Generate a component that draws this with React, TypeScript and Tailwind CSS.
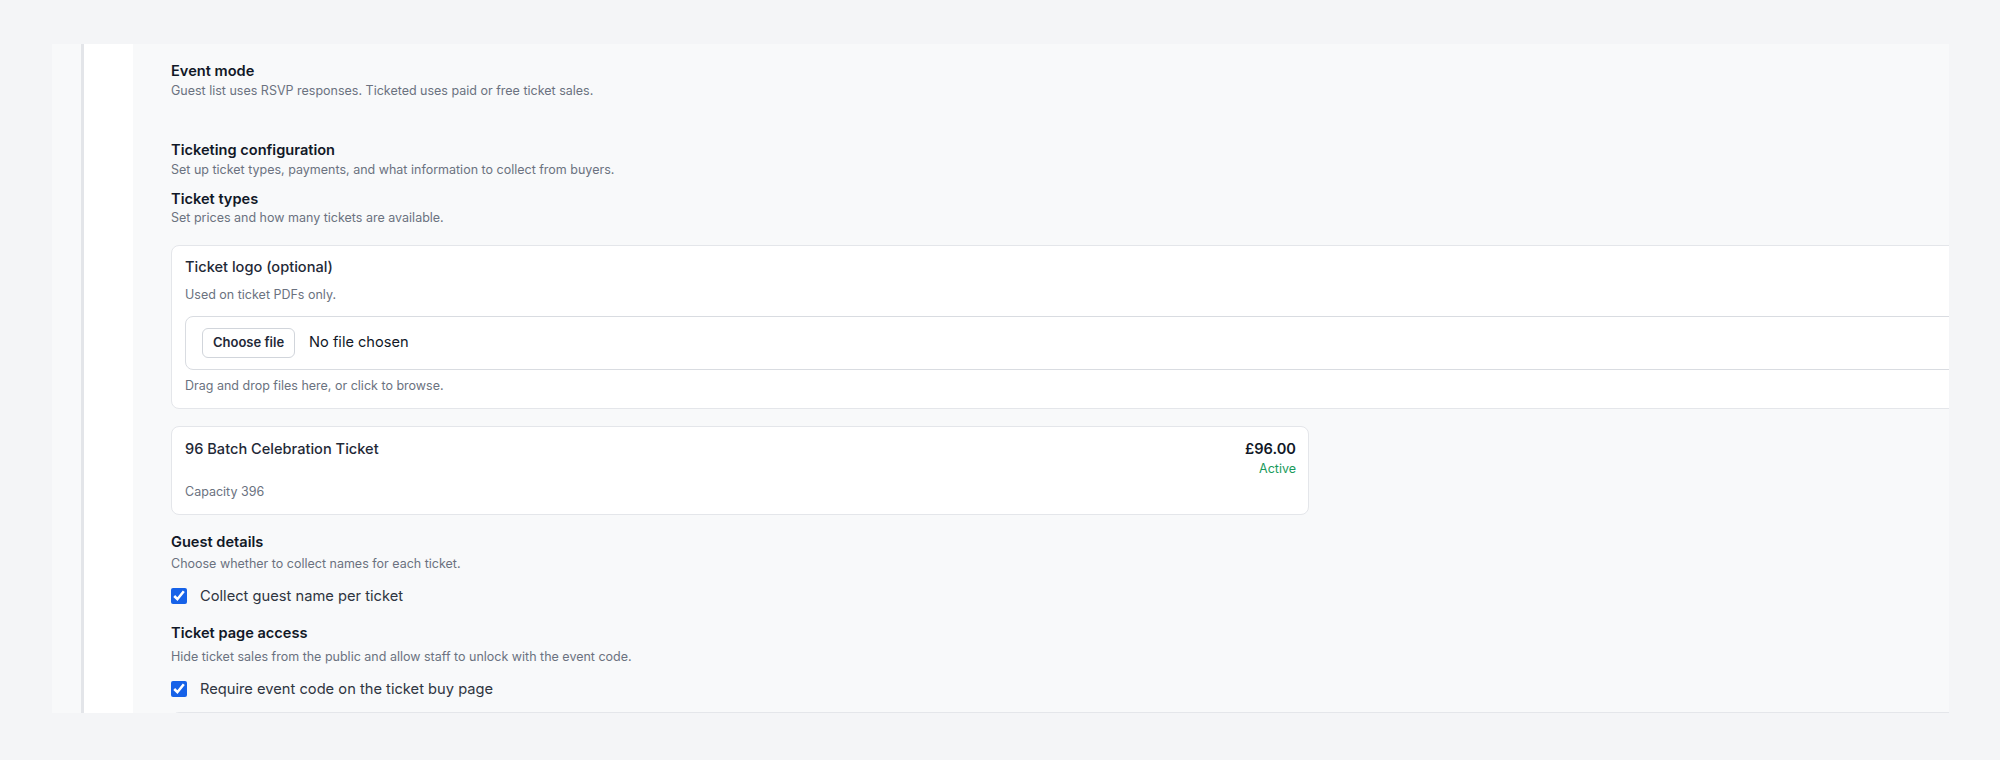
import React from "react";

function SectionHead({ title, desc, className = "" }: { title: string; desc: string; className?: string }) {
  return (
    <div className={className}>
      <div className="text-[14.6px] leading-5 font-semibold text-[#111827]">{title}</div>
      <div className="mt-px text-[12.5px] leading-[18px] text-[#6b7280]">{desc}</div>
    </div>
  );
}

function CheckRow({ label, className = "" }: { label: string; className?: string }) {
  return (
    <label className={`flex items-center ${className}`}>
      <input type="checkbox" defaultChecked className="size-4 m-0 accent-[#1662e8]" />
      <span className="ml-[13px] text-[14.7px] leading-6 text-[#2f3541]">{label}</span>
    </label>
  );
}

export default function App() {
  return (
    <div
      className="min-h-screen bg-[#f4f5f7] pt-[44px] pl-[52px] pr-[51px]"
      style={{ fontFamily: "Inter, 'Noto Sans', sans-serif" }}
    >
      <div className="flex h-[669px] overflow-hidden bg-[#f8f9fa]">
        {/* rail + sidebar gutter */}
        <div className="w-[29px] shrink-0" />
        <div className="w-[3px] shrink-0 bg-[#e3e5e9]" />
        <div className="w-[49px] shrink-0 bg-white" />

        <main className="flex-1 min-w-0 overflow-hidden pl-[38px] pt-[17px]">
          <SectionHead
            title="Event mode"
            desc="Guest list uses RSVP responses. Ticketed uses paid or free ticket sales."
          />

          <SectionHead
            className="mt-10"
            title="Ticketing configuration"
            desc="Set up ticket types, payments, and what information to collect from buyers."
          />

          <div className="mt-2.5">
            <div className="text-[14.6px] leading-5 font-semibold text-[#111827]">Ticket types</div>
            <div className="text-[12.5px] leading-[18px] text-[#6b7280]">
              Set prices and how many tickets are available.
            </div>
          </div>

          {/* ticket logo upload */}
          <div className="mt-[18px] w-[1840px] rounded-lg border border-[#e4e6ea] bg-white pl-[13px] pt-[10px] pb-[13px]">
            <div className="text-[14.6px] leading-[22px] font-medium text-[#1f2937]">Ticket logo (optional)</div>
            <div className="mt-2 text-[12.5px] leading-[18px] text-[#6b7280]">Used on ticket PDFs only.</div>
            <div className="mt-3 flex h-[54px] items-center rounded-lg border-[1.5px] border-[#d9dce1] pl-4">
              <button className="h-[30px] rounded-md border border-[#d1d5db] bg-white px-[10px] text-[13px] font-semibold text-[#1f2937]">
                Choose file
              </button>
              <span className="ml-[14px] text-[14.6px] text-[#111827]">No file chosen</span>
            </div>
            <div className="mt-[7px] text-[12.5px] leading-[18px] text-[#6b7280]">
              Drag and drop files here, or click to browse.
            </div>
          </div>

          {/* ticket type */}
          <div className="mt-[17px] w-[1138px] rounded-lg border border-[#e4e6ea] bg-white pl-[13px] pr-[12px] pt-[11px] pb-[13px]">
            <div className="flex items-start justify-between">
              <div className="text-[14.6px] leading-[22px] font-medium text-[#1f2937]">96 Batch Celebration Ticket</div>
              <div className="text-right">
                <div className="text-[14.6px] leading-[22px] font-semibold text-[#111827]">£96.00</div>
                <div className="text-[12.5px] leading-[18px] text-[#1a9a5c]">Active</div>
              </div>
            </div>
            <div className="mt-[5px] text-[12.5px] leading-[18px] text-[#6b7280]">Capacity 396</div>
          </div>

          <div className="mt-[17px]">
            <div className="text-[14.6px] leading-5 font-semibold text-[#111827]">Guest details</div>
            <div className="mt-[3px] text-[12.5px] leading-[18px] text-[#6b7280]">
              Choose whether to collect names for each ticket.
            </div>
          </div>
          <CheckRow className="mt-[11px]" label="Collect guest name per ticket" />

          <div className="mt-[15px]">
            <div className="text-[14.6px] leading-5 font-semibold text-[#111827]">Ticket page access</div>
            <div className="mt-[5px] text-[12.5px] leading-[18px] text-[#6b7280]">
              Hide ticket sales from the public and allow staff to unlock with the event code.
            </div>
          </div>
          <CheckRow className="mt-[11px]" label="Require event code on the ticket buy page" />

          {/* next card, cut off by the panel */}
          <div className="mt-[11px] h-[80px] w-[1840px] rounded-lg border border-[#e4e6ea] bg-white" />
        </main>
      </div>
    </div>
  );
}
